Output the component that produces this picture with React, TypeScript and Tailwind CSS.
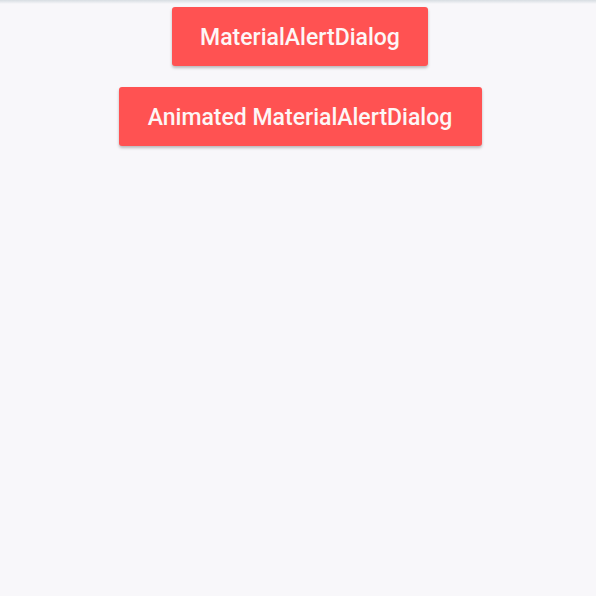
import React from "react";

export default function App() {
  return (
    <div className="relative w-[596px] h-[596px] bg-[#f8f7fa] overflow-hidden" style={{ fontFamily: "Roboto, 'Noto Sans', sans-serif" }}>
      <div className="absolute left-0 top-0 w-full h-[4px] bg-gradient-to-b from-[#d7dde2] to-[#f8f7fa]" />
      <div className="flex flex-col items-center pt-[7px] pl-[4px] gap-[21px]">
        <button className="h-[59px] w-[256px] pt-[3px] rounded-[3px] bg-[#ff5252] text-[#fdf6f6] text-[23px] font-medium shadow-[0_2px_3px_rgba(0,0,0,0.25)]">
          MaterialAlertDialog
        </button>
        <button className="h-[59px] w-[363px] pt-[3px] rounded-[3px] bg-[#ff5252] text-[#fdf6f6] text-[23px] font-medium shadow-[0_2px_3px_rgba(0,0,0,0.25)]">
          Animated MaterialAlertDialog
        </button>
      </div>
    </div>
  );
}
